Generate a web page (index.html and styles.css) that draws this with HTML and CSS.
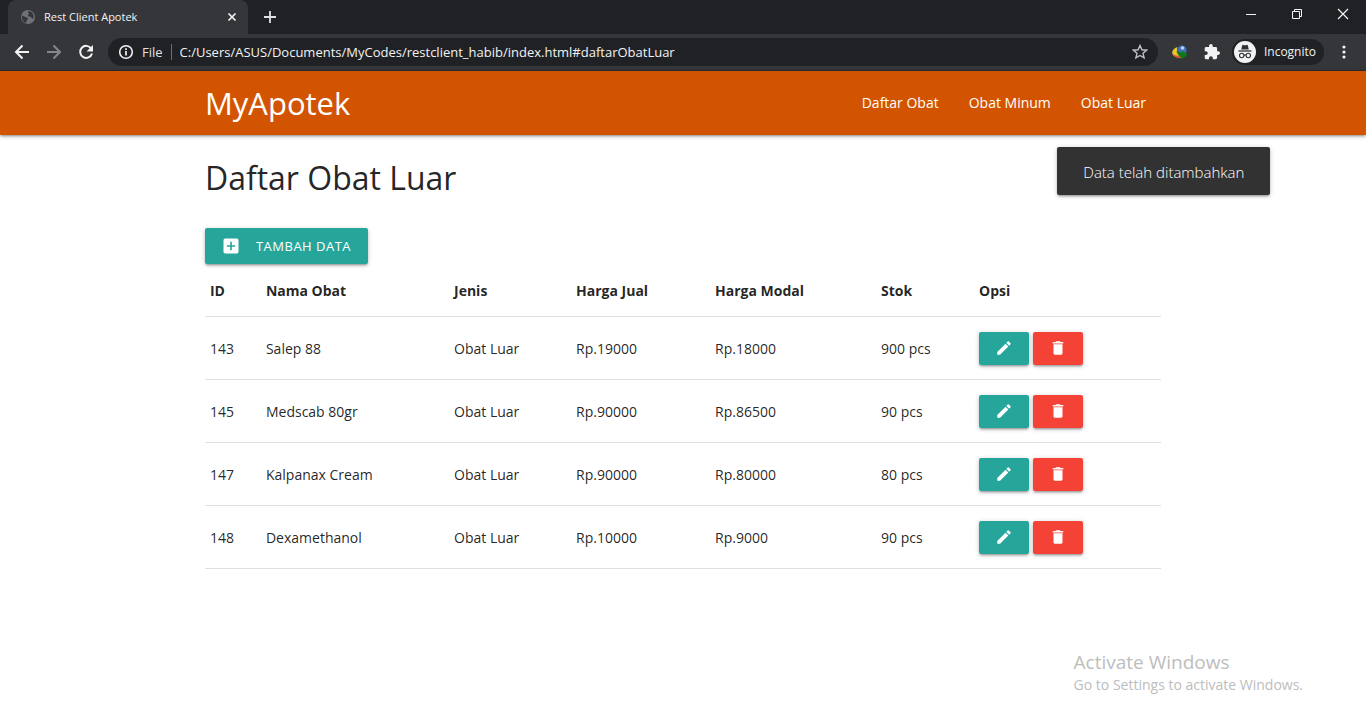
FILE: index.html
```html
<!DOCTYPE html>
<html lang="id">
<head>
<meta charset="utf-8">
<meta name="viewport" content="width=device-width, initial-scale=1">
<title>Rest Client Apotek</title>
<link rel="stylesheet" href="styles.css">
</head>
<body>
<svg class="sprite" aria-hidden="true">
  <symbol id="edit" viewBox="0 0 24 24"><path d="M3 17.25V21h3.75L17.81 9.94l-3.75-3.75L3 17.25zM20.71 7.04a1 1 0 0 0 0-1.41l-2.34-2.34a1 1 0 0 0-1.41 0l-1.83 1.83 3.75 3.75 1.83-1.83z"/></symbol>
  <symbol id="delete" viewBox="0 0 24 24"><path d="M6 19c0 1.100.9 2 2 2h8c1.100 0 2-.9 2-2V7H6v12zM19 4h-3.500l-1-1h-5l-1 1H5v2h14V4z"/></symbol>
</svg>
<div class="browser">
  <div class="tabbar">
    <div class="tab">
      <svg class="i16" viewBox="0 0 16 16"><circle cx="8" cy="8" r="7" fill="#6f7378"/><path d="M2 6.500C4 7 5 8 7 8.500c1.500.5 1 2 0 2.500-.5 1-.5 2-1 3C3 13 1.500 10 2 6.500zM8 2.500c2-.5 4 .5 5 2.500.8 1.500.8 3 .3 4.500-1 .3-2-.5-2.300-1.500-1-.3-2-.2-3-1C7 6 9 5.500 9 4.500 8.500 4 8 3.500 8 2.500z" fill="#35363a"/></svg>
      <span class="tab-title">Rest Client Apotek</span>
      <button class="icon-btn" aria-label="Close tab"><svg class="i10" viewBox="0 0 10 10"><path d="M1.500 1.500l7 7m0-7l-7 7" class="stroke" stroke-width="1.700"/></svg></button>
    </div>
    <button class="icon-btn newtab" aria-label="New tab"><svg class="i14" viewBox="0 0 14 14"><path d="M7 1v12M1 7h12" class="stroke" stroke-width="1.800"/></svg></button>
    <div class="winctl">
      <button class="icon-btn" aria-label="Minimize"><svg class="i12" viewBox="0 0 12 12"><path d="M1 6.500h10" class="stroke"/></svg></button>
      <button class="icon-btn" aria-label="Restore"><svg class="i12" viewBox="0 0 12 12"><path d="M1.500 3.500h7v7h-7zM3.500 3.500v-2h7v7h-2" class="stroke"/></svg></button>
      <button class="icon-btn" aria-label="Close"><svg class="i12" viewBox="0 0 12 12"><path d="M1 1l10 10M11 1L1 11" class="stroke" stroke-width="1.200"/></svg></button>
    </div>
  </div>
  <div class="toolbar">
    <button class="icon-btn" aria-label="Back"><svg class="i16" viewBox="0 0 16 16"><path d="M15 8H2m6.500-6.500L2 8l6.500 6.500" class="stroke" stroke-width="2"/></svg></button>
    <button class="icon-btn dim" aria-label="Forward"><svg class="i16" viewBox="0 0 16 16"><path d="M1 8h13M7.500 1.500L14 8l-6.500 6.500" class="stroke" stroke-width="2"/></svg></button>
    <button class="icon-btn" aria-label="Reload"><svg class="i16" viewBox="0 0 16 16"><path d="M13.200 4.500A6 6 0 1 0 14 9.500" class="stroke" stroke-width="2"/><path d="M15 1v6.500H8.500z" fill="currentColor"/></svg></button>
    <div class="omnibox">
      <svg class="i16" viewBox="0 0 16 16"><circle cx="8" cy="8" r="6.300" class="stroke" stroke-width="1.600"/><path d="M8 7v4.500M8 4.200v1.700" class="stroke" stroke-width="1.700"/></svg>
      <span class="scheme">File</span>
      <input class="url" type="text" aria-label="Address" value="C:/Users/ASUS/Documents/MyCodes/restclient_habib/index.html#daftarObatLuar">
      <button class="icon-btn star" aria-label="Bookmark"><svg class="i16" viewBox="0 0 16 16"><path d="M8 1.500l1.900 4.300 4.700.4-3.600 3.100 1.100 4.600L8 11.500l-4.100 2.400L5 9.300 1.400 6.200l4.700-.4z" class="stroke" stroke-width="1.400"/></svg></button>
    </div>
    <button class="icon-btn ext" aria-label="Download manager"><svg class="i16" viewBox="0 0 16 16"><circle cx="10" cy="6" r="4.600" fill="#3f6fb8"/><circle cx="10.500" cy="4" r="1.800" fill="#b9d3f2"/><path d="M5.500 3C1 4.500-.5 7.500.5 10c1.500 3 5 4 8.500 3.500V11C6 10.500 4 7 5.500 3z" fill="#e9c62c"/><path d="M.5 9.500c1 3.500 5 5 8.500 4V11.500c-3.500.5-7 0-8.500-2z" fill="#d8562a"/><path d="M4.500 7l5 1.600L10 7l6 3.600L9 15.500v-2.300C7 12 5 10 4.500 7z" fill="#0f7a1c"/></svg></button>
    <button class="icon-btn puzzle" aria-label="Extensions"><svg class="i16" viewBox="1 1 22 22"><path fill="currentColor" d="M20.500 11H19V7a2 2 0 0 0-2-2h-4V3.500a2.500 2.500 0 0 0-5 0V5H4a2 2 0 0 0-2 2v3.800h1.500a2.700 2.700 0 0 1 0 5.400H2V20c0 1.100.9 2 2 2h3.800v-1.500a2.700 2.700 0 0 1 5.400 0V22H17a2 2 0 0 0 2-2v-4h1.500a2.500 2.500 0 0 0 0-5z"/></svg></button>
    <div class="profile">
      <svg class="i22" viewBox="0 0 22 22"><circle cx="11" cy="11" r="11" fill="#f1f3f4"/><path d="M7.200 8.500l1-4c.2-.7.700-.8 1.200-.6.900.4 2.300.4 3.200 0 .5-.2 1-.1 1.200.6l1 4z" fill="#303134"/><path d="M4.500 10h13" stroke="#303134" stroke-width="1.300"/><g fill="none" stroke="#303134" stroke-width="1.100"><circle cx="7.700" cy="14.500" r="2.200"/><circle cx="14.300" cy="14.500" r="2.200"/><path d="M9.900 14.300q1.100-.8 2.200 0"/></g></svg>
      <span>Incognito</span>
    </div>
    <button class="icon-btn" aria-label="Menu"><svg class="i16" viewBox="0 0 16 16" fill="currentColor"><circle cx="8" cy="3" r="1.600"/><circle cx="8" cy="8" r="1.600"/><circle cx="8" cy="13" r="1.600"/></svg></button>
  </div>
</div>
<div class="page">
  <nav class="nav">
    <div class="container nav-inner">
      <a class="brand" href="#">MyApotek</a>
      <div class="links">
        <a href="#daftarObat">Daftar Obat</a>
        <a href="#daftarObatMinum">Obat Minum</a>
        <a href="#daftarObatLuar">Obat Luar</a>
      </div>
    </div>
  </nav>
  <main class="container">
    <h1>Daftar Obat Luar</h1>
    <button class="btn add"><svg class="i20" viewBox="0 0 24 24" fill="currentColor"><path d="M19 3H5a2 2 0 0 0-2 2v14c0 1.100.9 2 2 2h14a2 2 0 0 0 2-2V5a2 2 0 0 0-2-2zm-2 10h-4v4h-2v-4H7v-2h4V7h2v4h4v2z"/></svg>Tambah Data</button>
    <table>
      <colgroup><col class="c-id"><col class="c-name"><col class="c-kind"><col class="c-sell"><col class="c-cost"><col class="c-stock"><col></colgroup>
      <thead><tr><th>ID</th><th>Nama Obat</th><th>Jenis</th><th>Harga Jual</th><th>Harga Modal</th><th>Stok</th><th>Opsi</th></tr></thead>
      <tbody>
        <tr><td>143</td><td>Salep 88</td><td>Obat Luar</td><td>Rp.19000</td><td>Rp.18000</td><td>900 pcs</td><td><div class="actions"><button class="btn small" aria-label="Edit"><svg class="i18"><use href="#edit"/></svg></button><button class="btn small red" aria-label="Hapus"><svg class="i18"><use href="#delete"/></svg></button></div></td></tr>
        <tr><td>145</td><td>Medscab 80gr</td><td>Obat Luar</td><td>Rp.90000</td><td>Rp.86500</td><td>90 pcs</td><td><div class="actions"><button class="btn small" aria-label="Edit"><svg class="i18"><use href="#edit"/></svg></button><button class="btn small red" aria-label="Hapus"><svg class="i18"><use href="#delete"/></svg></button></div></td></tr>
        <tr><td>147</td><td>Kalpanax Cream</td><td>Obat Luar</td><td>Rp.90000</td><td>Rp.80000</td><td>80 pcs</td><td><div class="actions"><button class="btn small" aria-label="Edit"><svg class="i18"><use href="#edit"/></svg></button><button class="btn small red" aria-label="Hapus"><svg class="i18"><use href="#delete"/></svg></button></div></td></tr>
        <tr><td>148</td><td>Dexamethanol</td><td>Obat Luar</td><td>Rp.10000</td><td>Rp.9000</td><td>90 pcs</td><td><div class="actions"><button class="btn small" aria-label="Edit"><svg class="i18"><use href="#edit"/></svg></button><button class="btn small red" aria-label="Hapus"><svg class="i18"><use href="#delete"/></svg></button></div></td></tr>
      </tbody>
    </table>
  </main>
  <div class="toast" role="status">Data telah ditambahkan</div>
  <div class="watermark"><div class="wm-title">Activate Windows</div><div>Go to Settings to activate Windows.</div></div>
</div>
</body>
</html>
```
FILE: styles.css
```css
* { box-sizing: border-box; }
body {
  margin: 0;
  min-height: 100vh;
  display: flex;
  flex-direction: column;
  background: #fff;
  color: rgba(0, 0, 0, .87);
  font: 14px/21px "Open Sans", "Noto Sans", sans-serif;
}
button, input { font: inherit; color: inherit; border: 0; padding: 0; background: none; }
svg { display: block; flex: none; }
.sprite { position: absolute; width: 0; height: 0; }
.stroke { fill: none; stroke: currentColor; }
.i10 { width: 10px; height: 10px; }
.i12 { width: 12px; height: 12px; }
.i14 { width: 14px; height: 14px; }
.i16 { width: 16px; height: 16px; }
.i18 { width: 18px; height: 18px; }
.i20 { width: 20px; height: 20px; }
.i22 { width: 22px; height: 22px; }

/* Browser chrome */
.browser { background: #202124; color: #f1f3f4; font-size: 12px; line-height: 16px; }
.icon-btn { display: flex; align-items: center; justify-content: center; }
.tabbar { display: flex; align-items: stretch; height: 34px; padding-left: 8px; }
.tab {
  display: flex;
  align-items: center;
  gap: 8px;
  width: 240px;
  padding: 0 11px 0 12px;
  border-radius: 8px 8px 0 0;
  background: #35363a;
}
.tab-title { flex: 1; font-size: 11px; }
.newtab { width: 44px; color: #dfe1e5; }
.winctl { display: flex; margin-left: auto; padding-bottom: 6px; }
.winctl .icon-btn { width: 46px; }
.toolbar {
  display: flex;
  align-items: center;
  gap: 16px;
  height: 37px;
  padding: 0 14px;
  background: #35363a;
  border-bottom: 1px solid #292a2d;
}
.dim { color: #85878b; }
.omnibox {
  display: flex;
  flex: 1;
  align-items: center;
  height: 28px;
  margin-left: -2px;
  padding: 0 10px;
  border-radius: 14px;
  background: #202124;
}
.scheme { margin-left: 8px; padding-right: 8px; border-right: 1px solid #6b6d71; color: #dfe1e5; }
.url, .scheme { font-size: 13px; }
.url { flex: 1; min-width: 0; margin-left: 8px; }
.star { color: #bdc1c6; }
.ext { margin-left: -2px; }
.profile {
  display: flex;
  align-items: center;
  gap: 8px;
  height: 26px;
  margin: 0 -4px;
  padding: 0 8px 0 2px;
  border-radius: 13px;
  background: #202124;
}
.toolbar > :last-child { margin: 0; }

/* Page */
.page { position: relative; flex: 1; }
.container { width: 70%; margin: 0 auto; }
.nav {
  background: #d35400;
  color: #fff;
  box-shadow: 0 2px 2px rgba(0, 0, 0, .14), 0 3px 1px -2px rgba(0, 0, 0, .12), 0 1px 5px rgba(0, 0, 0, .2);
}
.nav-inner { display: flex; justify-content: space-between; align-items: center; height: 64px; }
.nav a { color: inherit; text-decoration: none; }
.brand { font-size: 31px; line-height: 64px; }
.links { display: flex; }
.links a { padding: 0 15px; line-height: 66px; }
h1 { margin: 23px 0 31px; font-size: 32px; line-height: 39px; font-weight: 400; }
.btn {
  display: flex;
  align-items: center;
  justify-content: center;
  height: 36px;
  border-radius: 2px;
  background: #26a69a;
  color: #fff;
  fill: #fff;
  box-shadow: 0 2px 2px rgba(0, 0, 0, .14), 0 3px 1px -2px rgba(0, 0, 0, .12), 0 1px 5px rgba(0, 0, 0, .2);
}
.add { gap: 15px; padding: 0 17px 0 16px; font-size: 13px; letter-spacing: .5px; text-transform: uppercase; }
.small { width: 50px; height: 33px; }
.small svg { margin-bottom: 1px; }
.red { background: #f44336; }
table { width: 100%; border-collapse: collapse; table-layout: fixed; }
tr { border-bottom: 1px solid rgba(0, 0, 0, .12); }
th, td { padding: 14px 5px; text-align: left; }
th { padding: 16px 5px 15px; font-weight: 700; }
td { font-weight: 400; }
.c-id { width: 5.86%; }
.c-name { width: 19.67%; }
.c-kind { width: 12.76%; }
.c-sell { width: 14.54%; }
.c-cost { width: 17.36%; }
.c-stock { width: 10.25%; }
.actions { display: flex; gap: 4px; padding-top: 1px; }
.toast {
  position: absolute;
  top: 76px;
  right: 7%;
  padding: 11px 26px 9px;
  border-radius: 2px;
  background: #323232;
  color: #fff;
  font-size: 15px;
  font-weight: 300;
  line-height: 28px;
  box-shadow: 0 2px 2px rgba(0, 0, 0, .14), 0 3px 1px -2px rgba(0, 0, 0, .12), 0 1px 5px rgba(0, 0, 0, .2);
}
.watermark { position: absolute; right: 63px; bottom: 33px; color: #bdbdbd; line-height: 20px; }
.wm-title { font-size: 19px; line-height: 26px; }
```
